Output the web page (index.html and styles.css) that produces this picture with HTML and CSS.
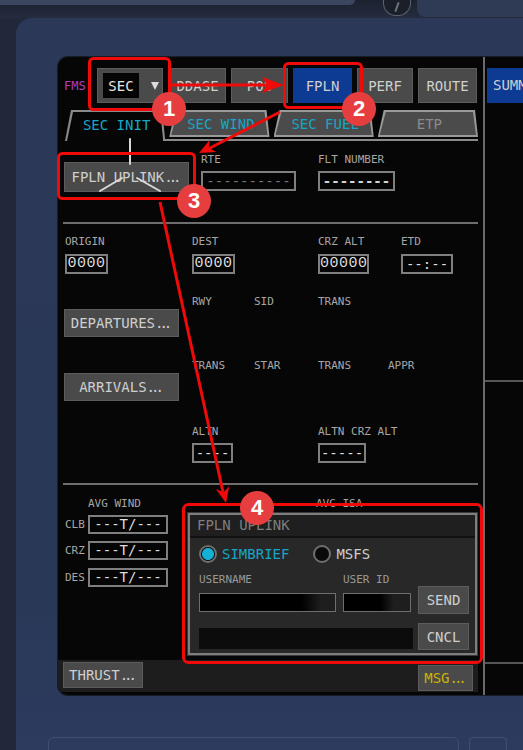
FILE: index.html
```html
<!DOCTYPE html>
<html>
<head>
<meta charset="utf-8">
<link rel="stylesheet" href="styles.css">
</head>
<body>
<div class="top-strip">
  <div class="ts-left"></div>
  <div class="ts-knob"><div class="ts-screw"></div></div>
  <div class="ts-right"></div>
</div>
<div class="bezel">
  <div class="screen">
    <div class="main">
      <div class="nav">
        <span class="fms">FMS</span>
        <div class="btn btn-sec"><span class="sec-val">SEC</span><span class="tri"></span></div>
        <div class="btn w57">DDASE</div>
        <div class="btn w57">POS</div>
        <div class="btn btn-active w59">FPLN</div>
        <div class="btn w56">PERF</div>
        <div class="btn w59">ROUTE</div>
      </div>
      <div class="tabs">
        <div class="tab tab-active"><div class="tab-in">SEC INIT</div></div>
        <div class="tab"><div class="tab-in">SEC WIND</div></div>
        <div class="tab"><div class="tab-in">SEC FUEL</div></div>
        <div class="tab tab-dim"><div class="tab-in">ETP</div></div>
      </div>
      <div class="tabline"></div>
      <div class="s1">
        <div class="btn btn-uplink">FPLN UPLINK<span class="dots">...</span></div>
        <div class="field f-rte"><div class="lbl">RTE</div><div class="box box-dim">----------</div></div>
        <div class="field f-flt"><div class="lbl">FLT NUMBER</div><div class="box">--------</div></div>
      </div>
      <div class="hr"></div>
      <div class="s2">
        <div class="lbl r1 c1">ORIGIN</div>
        <div class="lbl r1 c2">DEST</div>
        <div class="lbl r1 c4">CRZ ALT</div>
        <div class="lbl r1 c5 etd">ETD</div>
        <div class="box r3 c1 w43 num">0000</div>
        <div class="box r3 c2 w43 num">0000</div>
        <div class="box r3 c4 w51 num">00000</div>
        <div class="box r3 c5 w52 etd">--:--</div>
        <div class="lbl r5 c2">RWY</div>
        <div class="lbl r5 c3">SID</div>
        <div class="lbl r5 c4">TRANS</div>
        <div class="btn r6 c1 wide">DEPARTURES<span class="dots">...</span></div>
        <div class="lbl r8 c2">TRANS</div>
        <div class="lbl r8 c3">STAR</div>
        <div class="lbl r8 c4">TRANS</div>
        <div class="lbl r8 c5">APPR</div>
        <div class="btn r9 c1 wide">ARRIVALS<span class="dots">...</span></div>
        <div class="lbl r11 c2">ALTN</div>
        <div class="lbl r11 c4">ALTN CRZ ALT</div>
        <div class="box r13 c2 w41">----</div>
        <div class="box r13 c4 w48">-----</div>
      </div>
      <div class="hr"></div>
      <div class="s3">
        <div class="lbl wt">AVG WIND</div>
        <div class="lbl isa">AVG ISA</div>
        <div class="lbl wl r3">CLB</div><div class="box wind r3">---T/---</div>
        <div class="lbl wl r5">CRZ</div><div class="box wind r5">---T/---</div>
        <div class="lbl wl r7">DES</div><div class="box wind r7">---T/---</div>
      </div>
      <div class="bottom-bar">
        <div class="btn btn-thrust">THRUST<span class="dots">...</span></div>
        <div class="btn btn-msg">MSG<span class="dots">...</span></div>
      </div>
    </div>
    <div class="side">
      <div class="btn-summ">SUMMARY</div>
      <div class="side-hr h1"></div>
      <div class="side-hr h2"></div>
    </div>
    <div class="popup">
      <div class="popup-title">FPLN UPLINK</div>
      <div class="popup-body">
        <div class="radios">
          <div class="radio on"><span class="dot"></span>SIMBRIEF</div>
          <div class="radio"><span class="dot"></span>MSFS</div>
        </div>
        <div class="plabels"><span class="lbl">USERNAME</span><span class="lbl uid">USER ID</span></div>
        <div class="inputs"><div class="inp inp-user"></div><div class="inp inp-id"></div></div>
        <div class="btn pbtn send">SEND</div>
        <div class="pbar"></div>
        <div class="btn pbtn cncl">CNCL</div>
      </div>
    </div>
  </div>
  <div class="bezel-bottom"><div class="slot"></div><div class="sq"></div></div>
</div>
<svg class="annot" width="523" height="750" viewBox="0 0 523 750">
  <g stroke="#d8d8d8" stroke-width="2" fill="none" stroke-linecap="round">
    <line x1="130" y1="139" x2="130" y2="164"/>
    <line x1="100" y1="191" x2="122" y2="178"/>
    <line x1="137" y1="178" x2="160" y2="191"/>
  </g>
  <g stroke="#f00a0a" stroke-width="3" fill="none">
    <rect x="89.5" y="58.5" width="80" height="51" rx="4"/>
    <rect x="284.5" y="63.5" width="77" height="44" rx="4"/>
    <rect x="58.5" y="153.5" width="136" height="45" rx="4"/>
    <rect x="183.5" y="504.5" width="298" height="158" rx="5"/>
    <line x1="170" y1="85" x2="272" y2="85"/>
    <line x1="280" y1="112" x2="208" y2="149"/>
    <line x1="160" y1="202" x2="223" y2="492"/>
  </g>
  <g fill="#f00a0a">
    <polygon points="284,85 262,77 267,85 262,93"/>
    <polygon points="199,153 210,139.5 208.8,148 216.4,151.9"/>
    <polygon points="226,503 229.4,485.9 223.7,492.3 215.8,488.9"/>
  </g>
</svg>
<div class="badge b1">1</div>
<div class="badge b2">2</div>
<div class="badge b3">3</div>
<div class="badge b4">4</div>
</body>
</html>
```
FILE: styles.css
```css
html, body {
  margin: 0;
  padding: 0;
}
body {
  width: 523px;
  height: 750px;
  overflow: hidden;
  position: relative;
  background: #20283a;
  font-family: "DejaVu Sans Mono", "Liberation Mono", monospace;
  color: #cfcfcf;
}

/* top strip */
.top-strip {
  height: 18px;
  display: flex;
  background: linear-gradient(#1c2230, #242c3e);
}
.ts-left {
  width: 355px;
  height: 5px;
  background: #3a465f;
  border-radius: 0 0 8px 0;
}
.ts-knob {
  width: 26px;
  height: 15px;
  margin-left: 28px;
  border-radius: 0 0 13px 13px;
  background: #1a1f28;
  border: 1px solid #5a6474;
  border-top: none;
  display: flex;
  justify-content: center;
}
.ts-screw {
  width: 2px;
  height: 10px;
  background: #6a7383;
  margin-top: 2px;
  transform: rotate(20deg);
}
.ts-right {
  margin-left: auto;
  width: 106px;
  height: 17px;
  background: #2f3a54;
  border-radius: 0 0 0 8px;
}

/* bezel */
.bezel {
  margin-left: 16px;
  height: 732px;
  box-sizing: border-box;
  padding: 39px 0 0 42px;
  background: linear-gradient(180deg, #2b3858 0%, #2a3858 80%, #2c3b5e 100%);
  border-radius: 16px 0 0 0;
}
.bezel-bottom {
  display: flex;
  margin-top: 42px;
  margin-left: -10px;
}
.slot {
  width: 409px;
  height: 20px;
  border: 1px solid #3f4e72;
  border-radius: 6px;
}
.sq {
  width: 36px;
  height: 20px;
  margin-left: 10px;
  border: 1px solid #3f4e72;
  border-radius: 4px;
}

/* screen */
.screen {
  position: relative;
  width: 465px;
  height: 638px;
  background: #060606;
  border-radius: 10px 0 0 10px;
  display: grid;
  grid-template-columns: 425px 1fr;
  overflow: hidden;
  box-shadow: 0 0 0 1px #161c28;
}
.main {
  display: flex;
  flex-direction: column;
}

/* buttons */
.btn {
  box-sizing: border-box;
  background: #4a4a4a;
  border: 1px solid #5c5c5c;
  color: #cfcfcf;
  font-size: 14px;
  display: flex;
  align-items: center;
  justify-content: center;
  white-space: nowrap;
}
.dots {
  letter-spacing: -4px;
  margin-right: 4px;
}

/* nav */
.nav {
  display: flex;
  align-items: center;
  gap: 5px;
  height: 35px;
  margin-top: 11px;
  padding-left: 6px;
}
.nav .btn { height: 35px; }
.fms {
  width: 28px;
  font-size: 12px;
  color: #b23cc4;
}
.btn-sec {
  width: 66px;
  margin-right: 1px;
  justify-content: flex-start;
  padding-left: 5px;
}
.sec-val {
  background: #050505;
  color: #e6e6e6;
  width: 36px;
  height: 25px;
  display: flex;
  align-items: center;
  justify-content: center;
}
.tri {
  margin-left: 12px;
  width: 0;
  height: 0;
  border-left: 4px solid transparent;
  border-right: 4px solid transparent;
  border-top: 8px solid #dcdcdc;
}
.w56 { width: 56px; }
.w57 { width: 57px; }
.w59 { width: 59px; }
.btn-active {
  background: #0d3a92;
  border-color: #0d3a92;
}

/* tabs */
.tabs {
  display: grid;
  grid-template-columns: repeat(4, 1fr);
  grid-template-rows: 27px;
  align-items: start;
  gap: 4px;
  margin: 7px 0 0 7px;
  width: 413px;
  height: 27px;
}
.tab {
  box-sizing: border-box;
  height: 27px;
  padding: 2px;
  background: #999999;
  clip-path: polygon(0 100%, 6px 0, calc(100% - 3px) 0, 100% 100%);
}
.tab-in {
  height: 100%;
  background: #4b4b4b;
  clip-path: polygon(0 100%, 6px 0, calc(100% - 3px) 0, 100% 100%);
  display: flex;
  align-items: center;
  justify-content: center;
  font-size: 14px;
  color: #18a5c8;
  padding-left: 3px;
}
.tab-active {
  height: 31px;
  padding-bottom: 0;
  background: #8a8a8a;
}
.tab-active .tab-in {
  background: #060606;
  padding-bottom: 4px;
  box-sizing: border-box;
}
.tab-dim .tab-in { color: #8a8a8a; }
.tabline {
  height: 2px;
  margin: 2px 0 0 105px;
  width: 315px;
  background: #8a8a8a;
}

/* labels and boxes */
.lbl {
  font-size: 11px;
  line-height: 14px;
  color: #a6a6a6;
  white-space: nowrap;
}
.box {
  box-sizing: border-box;
  height: 20px;
  border: 2px solid #7f7f7f;
  background: #050505;
  color: #dedede;
  font-size: 14px;
  line-height: 16px;
  text-align: center;
  white-space: nowrap;
  overflow: hidden;
}
.box-dim { color: #767676; }
.num {
  font-family: "Liberation Mono", monospace;
  font-size: 15px;
  letter-spacing: 0.5px;
}

/* section 1 */
.s1 {
  height: 81px;
  box-sizing: border-box;
  padding: 12px 0 0 6px;
  display: flex;
  align-items: flex-start;
}
.btn-uplink {
  margin-top: 9px;
  width: 125px;
  height: 30px;
}
.field {
  display: flex;
  flex-direction: column;
  gap: 4px;
}
.f-rte { margin-left: 12px; width: 95px; }
.f-flt { margin-left: 22px; width: 77px; }
.f-flt .box { font-weight: bold; color: #d4d4d4; }

.hr {
  height: 2px;
  margin-left: 5px;
  width: 415px;
  background: #6e6e6e;
}

/* section 2 */
.s2 {
  height: 259px;
  box-sizing: border-box;
  padding: 11px 0 0 7px;
  display: grid;
  grid-template-columns: 127px 62px 64px 70px 1fr;
  grid-template-rows: 14px 5px 20px 21px 14px 28px 22px 14px 28px 24px 14px 4px 20px;
  align-items: start;
}
.r1 { grid-row: 1; }
.r3 { grid-row: 3; }
.r5 { grid-row: 5; }
.r6 { grid-row: 6; }
.r7 { grid-row: 7; }
.r8 { grid-row: 8; }
.r9 { grid-row: 9; }
.r11 { grid-row: 11; }
.r13 { grid-row: 13; }
.c1 { grid-column: 1; }
.c2 { grid-column: 2; }
.c3 { grid-column: 3; }
.c4 { grid-column: 4; }
.c5 { grid-column: 5; }
.etd { margin-left: 13px; }
.w41 { width: 41px; }
.w43 { width: 43px; }
.w48 { width: 48px; }
.w51 { width: 51px; }
.w52 { width: 52px; }
.wide {
  width: 115px;
  height: 28px;
  margin-left: -1px;
}

/* section 3 */
.s3 {
  height: 175px;
  box-sizing: border-box;
  padding: 12px 0 0 7px;
  display: grid;
  grid-template-columns: 23px 80px 148px auto;
  grid-template-rows: 14px 4px 19px 7px 19px 8px 19px;
  align-items: center;
}
.wt { grid-row: 1; grid-column: 2; }
.isa { grid-row: 1; grid-column: 4; }
.wl { grid-column: 1; font-size: 11px; }
.wind {
  grid-column: 2;
  height: 19px;
  line-height: 15px;
  width: 80px;
}

/* bottom bar */
.bottom-bar {
  height: 32px;
  width: 420px;
  background: #1d1d1d;
  display: flex;
  align-items: flex-start;
  padding-left: 5px;
  box-sizing: border-box;
}
.btn-thrust {
  margin-top: 2px;
  width: 80px;
  height: 26px;
}
.btn-msg {
  margin-left: auto;
  margin-right: 5px;
  margin-top: 5px;
  width: 55px;
  height: 26px;
  color: #c9b400;
}

/* side column */
.side {
  border-left: 2px solid #6a6a6a;
  padding-top: 11px;
  display: flex;
  flex-direction: column;
}
.btn-summ {
  margin-left: 2px;
  height: 35px;
  background: #0d3a92;
  color: #cfcfcf;
  font-size: 14px;
  line-height: 35px;
  padding-left: 6px;
  white-space: nowrap;
  overflow: hidden;
}
.side-hr {
  height: 2px;
  background: #555555;
}
.h1 { margin-top: 277px; }
.h2 { margin-top: 280px; }

/* popup */
.popup {
  position: absolute;
  left: 130px;
  top: 456px;
  width: 289px;
  height: 142px;
  box-sizing: border-box;
  border: 2px solid #7e7e7e;
  background: #282828;
  box-shadow: 0 0 0 1px #3a3a3a;
}
.popup-title {
  height: 21px;
  line-height: 21px;
  background: #1f1f1f;
  border-bottom: 2px solid #111111;
  color: #7e7e7e;
  font-size: 14px;
  padding-left: 7px;
}
.popup-body {
  padding: 7px 6px 0 9px;
  display: grid;
  grid-template-columns: 214px 51px;
  column-gap: 5px;
  grid-template-rows: 18px 11px 12px 7px 19px 2px 9px 5px 21px 1px;
}
.radios {
  grid-row: 1;
  grid-column: 1 / 3;
  display: flex;
  align-items: center;
  gap: 24px;
}
.radio {
  display: flex;
  align-items: center;
  gap: 5px;
  font-size: 14px;
  color: #cfcfcf;
}
.radio.on { color: #18a5c8; }
.dot {
  box-sizing: border-box;
  width: 18px;
  height: 18px;
  border-radius: 50%;
  border: 2px solid #6e6e6e;
  background: #0a0a0a;
}
.radio.on .dot {
  background: radial-gradient(circle, #14b0d6 0 5.5px, #0a0a0a 6.5px);
}
.plabels {
  grid-row: 3;
  grid-column: 1;
  display: flex;
  align-items: center;
}
.plabels .lbl { line-height: 12px; color: #989898; }
.uid { margin-left: 91px; }
.inputs {
  grid-row: 5;
  grid-column: 1;
  display: flex;
  gap: 7px;
}
.inp {
  box-sizing: border-box;
  height: 19px;
  border: 1px solid #6e6e6e;
}
.inp-user {
  width: 137px;
  background: linear-gradient(90deg, #000 0, #000 75%, #1e1e1e 90%, #1e1e1e 100%);
}
.inp-id {
  width: 68px;
  background: linear-gradient(90deg, #000 0, #000 55%, #1e1e1e 75%, #1e1e1e 100%);
}
.pbtn { height: 100%; }
.send { grid-row: 4 / 7; grid-column: 2; }
.cncl { grid-row: 8 / 11; grid-column: 2; }
.pbar {
  grid-row: 9;
  grid-column: 1;
  background: #0c0c0c;
}

/* annotations */
.annot {
  position: absolute;
  left: 0;
  top: 0;
  pointer-events: none;
}
.badge {
  position: absolute;
  width: 34px;
  height: 34px;
  border-radius: 50%;
  background: #e63e3e;
  color: #ffffff;
  font-family: "Liberation Sans", Arial, sans-serif;
  font-weight: bold;
  font-size: 22px;
  display: flex;
  align-items: center;
  justify-content: center;
}
.b1 { left: 152px; top: 92px; }
.b2 { left: 342px; top: 92px; }
.b3 { left: 177px; top: 184px; }
.b4 { left: 240px; top: 491px; }
```
